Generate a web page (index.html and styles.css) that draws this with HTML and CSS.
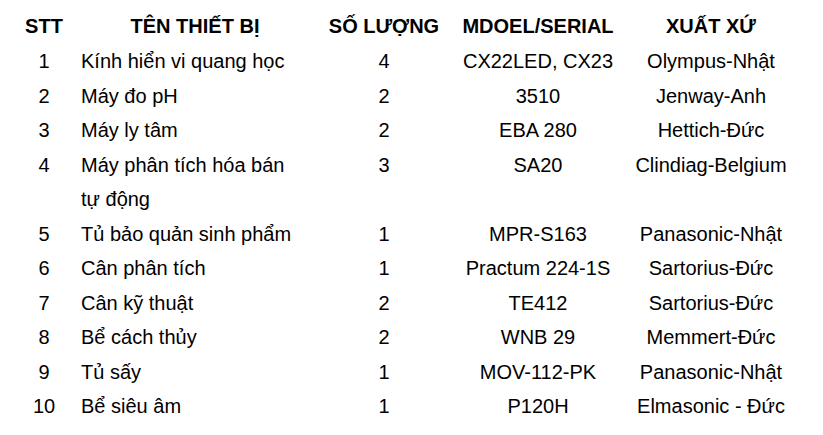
FILE: index.html
```html
<!DOCTYPE html>
<html lang="vi">
<head>
<meta charset="utf-8">
<link rel="stylesheet" href="styles.css">
</head>
<body>
<div class="table">
  <div class="row head">
    <div class="c stt">STT</div>
    <div class="c name">TÊN THIẾT BỊ</div>
    <div class="c qty">SỐ LƯỢNG</div>
    <div class="c model">MDOEL/SERIAL</div>
    <div class="c origin">XUẤT XỨ</div>
  </div>
  <div class="row">
    <div class="c stt">1</div>
    <div class="c name left">Kính hiển vi quang học</div>
    <div class="c qty">4</div>
    <div class="c model">CX22LED, CX23</div>
    <div class="c origin">Olympus-Nhật</div>
  </div>
  <div class="row">
    <div class="c stt">2</div>
    <div class="c name left">Máy đo pH</div>
    <div class="c qty">2</div>
    <div class="c model">3510</div>
    <div class="c origin">Jenway-Anh</div>
  </div>
  <div class="row">
    <div class="c stt">3</div>
    <div class="c name left">Máy ly tâm</div>
    <div class="c qty">2</div>
    <div class="c model">EBA 280</div>
    <div class="c origin">Hettich-Đức</div>
  </div>
  <div class="row">
    <div class="c stt">4</div>
    <div class="c name left">Máy phân tích hóa bán tự động</div>
    <div class="c qty">3</div>
    <div class="c model">SA20</div>
    <div class="c origin">Clindiag-Belgium</div>
  </div>
  <div class="row">
    <div class="c stt">5</div>
    <div class="c name left">Tủ bảo quản sinh phẩm</div>
    <div class="c qty">1</div>
    <div class="c model">MPR-S163</div>
    <div class="c origin">Panasonic-Nhật</div>
  </div>
  <div class="row">
    <div class="c stt">6</div>
    <div class="c name left">Cân phân tích</div>
    <div class="c qty">1</div>
    <div class="c model">Practum 224-1S</div>
    <div class="c origin">Sartorius-Đức</div>
  </div>
  <div class="row">
    <div class="c stt">7</div>
    <div class="c name left">Cân kỹ thuật</div>
    <div class="c qty">2</div>
    <div class="c model">TE412</div>
    <div class="c origin">Sartorius-Đức</div>
  </div>
  <div class="row">
    <div class="c stt">8</div>
    <div class="c name left">Bể cách thủy</div>
    <div class="c qty">2</div>
    <div class="c model">WNB 29</div>
    <div class="c origin">Memmert-Đức</div>
  </div>
  <div class="row">
    <div class="c stt">9</div>
    <div class="c name left">Tủ sấy</div>
    <div class="c qty">1</div>
    <div class="c model">MOV-112-PK</div>
    <div class="c origin">Panasonic-Nhật</div>
  </div>
  <div class="row">
    <div class="c stt">10</div>
    <div class="c name left">Bể siêu âm</div>
    <div class="c qty">1</div>
    <div class="c model">P120H</div>
    <div class="c origin">Elmasonic - Đức</div>
  </div>
</div>
</body>
</html>
```
FILE: styles.css
```css
html, body {
  margin: 0;
  padding: 0;
  background: #ffffff;
  overflow: hidden;
}
body {
  padding: 8px 0 0 8px;
  font-family: "Liberation Sans", Arial, sans-serif;
  font-size: 20px;
  color: #000000;
}
.table {
  display: flex;
  flex-direction: column;
}
.row {
  display: grid;
  grid-template-columns: 72px 230px 148px 160px 186px;
  line-height: 34.5px;
}
.row.head {
  font-weight: bold;
  line-height: 36px;
}
.c {
  text-align: center;
  white-space: nowrap;
}
.name {
  white-space: normal;
}
.name.left {
  text-align: left;
  padding-left: 1px;
  padding-right: 6px;
}
```
